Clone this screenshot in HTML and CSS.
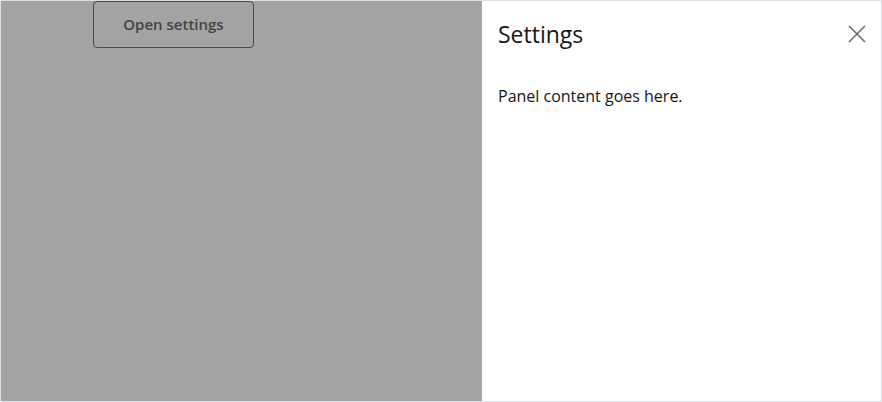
FILE: index.html
```html
<!DOCTYPE html>
<html lang="en">
<head>
<meta charset="utf-8">
<title>Settings panel</title>
<link rel="stylesheet" href="styles.css">
</head>
<body>
<div class="frame">
  <main class="page">
    <button class="open-btn" type="button">Open settings</button>
  </main>
  <div class="overlay"></div>
  <aside class="panel" role="dialog" aria-label="Settings">
    <header class="panel-head">
      <h2 class="panel-title">Settings</h2>
      <button class="close-btn" type="button" aria-label="Close">
        <svg width="18" height="18" viewBox="0 0 18 18" aria-hidden="true">
          <path d="M1 1 L17 17 M17 1 L1 17" stroke="#6a6a6a" stroke-width="1.6" fill="none"/>
        </svg>
      </button>
    </header>
    <div class="panel-body">
      <p>Panel content goes here.</p>
    </div>
  </aside>
</div>
</body>
</html>
```
FILE: styles.css
```css
* { box-sizing: border-box; }
html, body {
  margin: 0;
  padding: 0;
}
body {
  font-family: "Open Sans", "Noto Sans", sans-serif;
  background: #ffffff;
}
.frame {
  position: relative;
  width: 882px;
  height: 402px;
  border: 1px solid #dde1e6;
  overflow: hidden;
}
.page {
  padding: 0 0 0 92px;
}
.open-btn {
  width: 161px;
  height: 47px;
  border: 1px solid #727272;
  border-radius: 4px;
  background: #ffffff;
  font-family: "Open Sans", sans-serif;
  font-size: 15px;
  font-weight: 600;
  color: #6a6a6a;
  padding: 0 0 2px;
}
.overlay {
  position: absolute;
  inset: 0;
  background: rgba(0, 0, 0, 0.36);
}
.panel {
  position: absolute;
  top: 0;
  right: 0;
  bottom: 0;
  width: 399px;
  background: #ffffff;
  color: #161616;
  padding: 0 16px;
}
.panel-head {
  display: flex;
  align-items: center;
  justify-content: space-between;
  height: 66px;
}
.panel-title {
  margin: 0;
  font-size: 23px;
  font-weight: 400;
  line-height: 32px;
}
.close-btn {
  display: flex;
  align-items: center;
  justify-content: center;
  width: 24px;
  height: 24px;
  margin-right: -4px;
  padding: 0;
  border: 0;
  background: transparent;
}
.panel-body p {
  margin: 17px 0 0;
  font-size: 16px;
  line-height: 24px;
}
```
